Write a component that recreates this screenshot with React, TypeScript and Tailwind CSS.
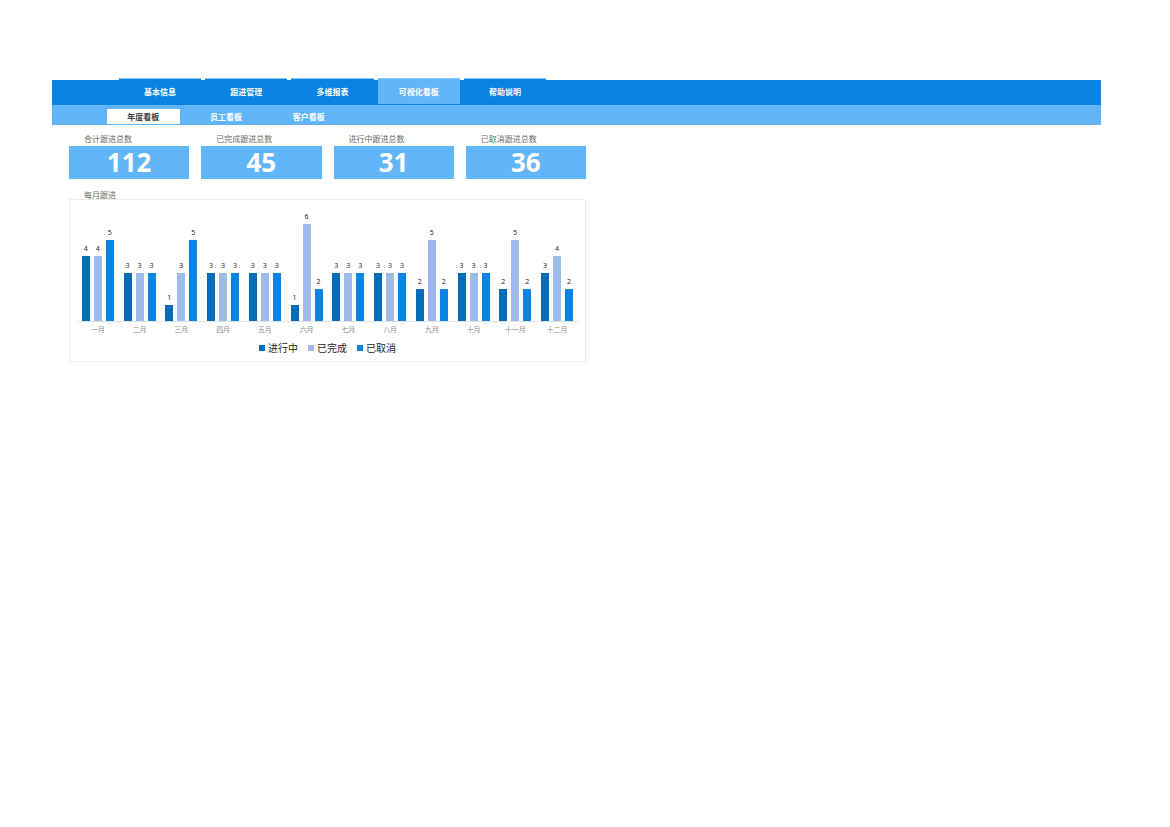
import React from "react";

const tabs = ["基本信息", "跟进管理", "多维报表", "可视化看板", "帮助说明"];
const subTabs = ["年度看板", "员工看板", "客户看板"];

const stats = [
  { label: "合计跟进总数", value: 112 },
  { label: "已完成跟进总数", value: 45 },
  { label: "进行中跟进总数", value: 31 },
  { label: "已取消跟进总数", value: 36 },
];

const series = [
  { name: "进行中", color: "bg-[#046cb9]" },
  { name: "已完成", color: "bg-[#a0b9eb]" },
  { name: "已取消", color: "bg-[#0984e3]" },
];

const months = [
  { name: "一月", values: [4, 4, 5] },
  { name: "二月", values: [3, 3, 3] },
  { name: "三月", values: [1, 3, 5] },
  { name: "四月", values: [3, 3, 3] },
  { name: "五月", values: [3, 3, 3] },
  { name: "六月", values: [1, 6, 2] },
  { name: "七月", values: [3, 3, 3] },
  { name: "八月", values: [3, 3, 3] },
  { name: "九月", values: [2, 5, 2] },
  { name: "十月", values: [3, 3, 3] },
  { name: "十一月", values: [2, 5, 2] },
  { name: "十二月", values: [3, 4, 2] },
];

// the plot is 7 units high, the tallest bar is 6
const MAX = 7;

function MonthlyChart() {
  return (
    <div className="border border-[#ececec] px-[7px] pt-2 pb-1">
      <div className="grid h-[114px] grid-cols-12 border-b border-[#e4e4e4]">
        {months.map((m) => (
          <div key={m.name} className="flex items-end justify-center gap-1">
            {m.values.map((v, i) => (
              <div key={series[i].name} className="flex h-full w-2 flex-col items-center justify-end">
                <span className="mb-[3px] text-[7px] leading-[8px] text-[#262626]">{v}</span>
                <div
                  className={`w-full shrink-0 ${series[i].color}`}
                  style={{ height: `${(v / MAX) * 100}%` }}
                />
              </div>
            ))}
          </div>
        ))}
      </div>
      <div className="grid grid-cols-12 pt-[3px]">
        {months.map((m) => (
          <span key={m.name} className="text-center text-[7px] leading-[10px] text-[#8c8c8c]">
            {m.name}
          </span>
        ))}
      </div>
      <div className="flex justify-center gap-2.5 pt-[7px] pb-[3px]">
        {series.map((s) => (
          <div key={s.name} className="flex items-center gap-[3px] text-[10px] leading-[12px] text-[#262626]">
            <span className={`size-1.5 ${s.color}`} />
            {s.name}
          </div>
        ))}
      </div>
    </div>
  );
}

export default function App() {
  return (
    <div className="min-h-screen bg-white pt-20 pr-[69px] pl-[52px] font-['Noto_Sans','Noto_Sans_CJK_SC',sans-serif]">
      <header>
        <nav className="flex h-[25px] items-end bg-[#0984e3] pb-px pl-[67px]">
          <div className="grid h-[26px] w-[427px] grid-cols-5 gap-1">
            {tabs.map((t) => (
              <button
                key={t}
                type="button"
                className={`border-t border-[#8cc6f4] pt-px text-[8px] leading-[12px] font-bold text-white ${t === "可视化看板" ? "bg-[#60b6f9]" : "bg-[#0984e3]"}`}
              >
                {t}
              </button>
            ))}
          </div>
        </nav>
        <nav className="flex h-5 items-end bg-[#60b6f9] pb-px pl-[55px]">
          <div className="grid h-[15px] w-[238px] grid-cols-3 gap-2.5">
            {subTabs.map((t) => (
              <button
                key={t}
                type="button"
                className={`text-[8px] leading-[12px] font-bold ${t === "年度看板" ? "bg-white text-[#404040]" : "text-white"}`}
              >
                {t}
              </button>
            ))}
          </div>
        </nav>
      </header>

      <main className="w-full max-w-[534px] pt-[7px] pl-[17px]">
        <section className="grid grid-cols-4 gap-3">
          {stats.map((s) => (
            <div key={s.label}>
              <div className="pb-px pl-[15px] text-[8px] leading-[13px] text-[#6b6b6b]">{s.label}</div>
              <div className="flex h-[33px] items-center justify-center bg-[#60b6f9] text-[26px] leading-[33px] font-bold text-white">
                {s.value}
              </div>
            </div>
          ))}
        </section>

        <section className="pt-3">
          <h2 className="pl-[15px] text-[8px] leading-[8px] text-[#6b6b6b]">每月跟进</h2>
          <MonthlyChart />
        </section>
      </main>
    </div>
  );
}
